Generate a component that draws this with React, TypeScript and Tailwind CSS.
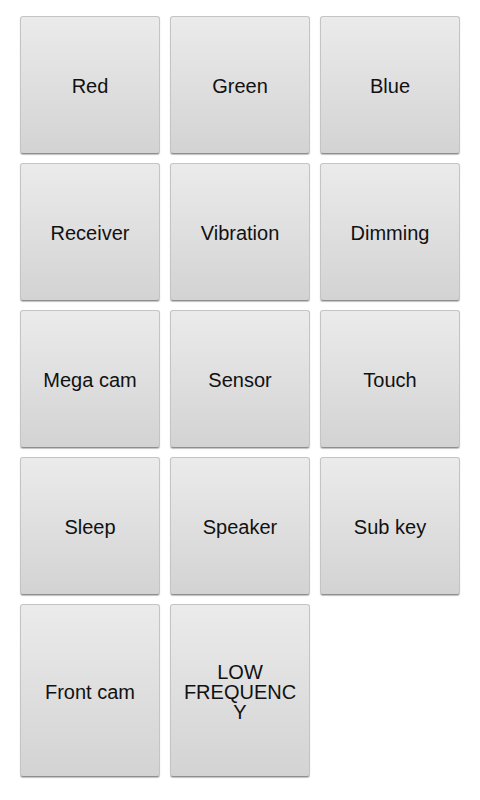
const tiles = [
  "Red",
  "Green",
  "Blue",
  "Receiver",
  "Vibration",
  "Dimming",
  "Mega cam",
  "Sensor",
  "Touch",
  "Sleep",
  "Speaker",
  "Sub key",
  "Front cam",
  "LOW FREQUENCY",
];

export default function App() {
  return (
    <div className="min-h-[800px] w-[480px] bg-white px-5 pt-4 font-['Liberation_Sans',Arial,sans-serif]">
      <div className="grid grid-cols-3 gap-x-2.5 gap-y-[9px]">
        {tiles.map((label, i) => (
          <button
            key={label}
            className={`${i >= 12 ? "h-[173px]" : "h-[138px]"} flex items-center justify-center rounded-[3px] border border-[#c4c4c4] border-b-[#8e8e8e] bg-gradient-to-b from-[#ebebeb] to-[#d3d3d3] px-3 pt-[2px] text-center text-[20px] leading-[20px] text-[#111] shadow-[0_1px_1px_rgba(0,0,0,0.25)] [overflow-wrap:anywhere]`}
          >
            {label}
          </button>
        ))}
      </div>
    </div>
  );
}
